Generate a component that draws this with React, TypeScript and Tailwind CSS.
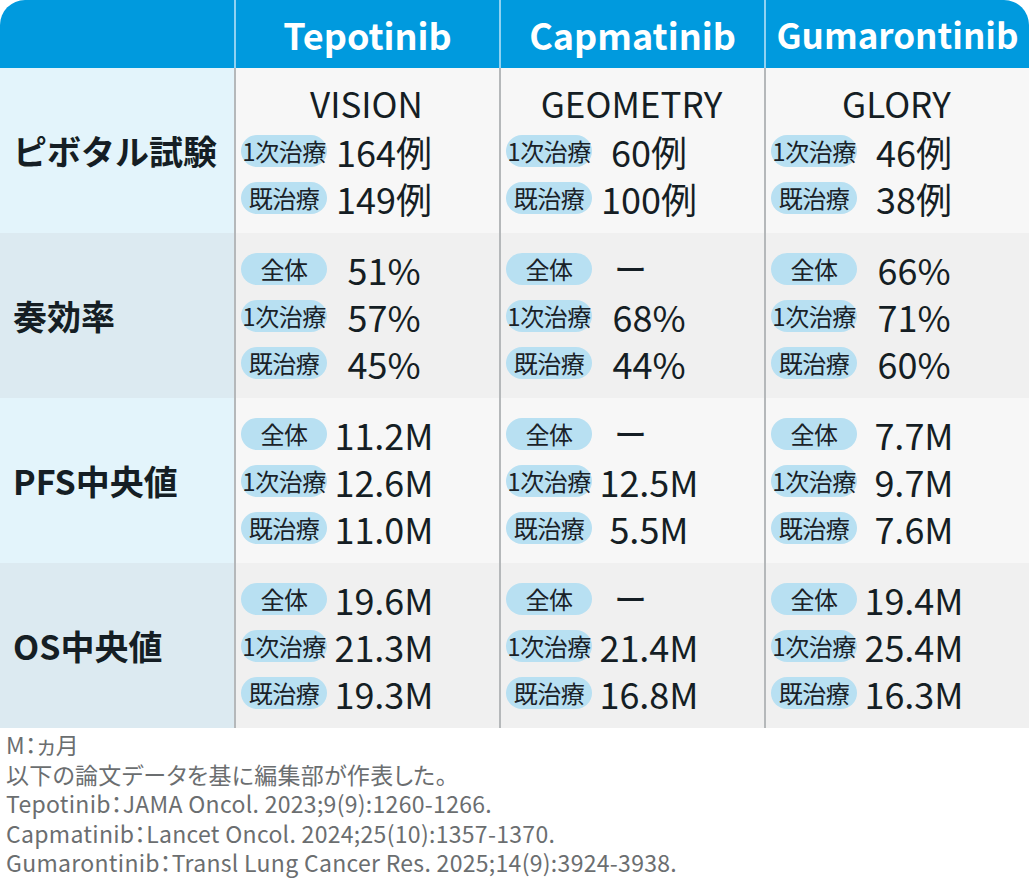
const font = { fontFamily: '"Noto Sans CJK JP", "Noto Sans", sans-serif' };

type Line = { tag: string; value: string };
type Cell = { title?: string; lines: Line[] };
type Row = { label: string; cells: Cell[] };

const drugs = ["Tepotinib", "Capmatinib", "Gumarontinib"];

const rows: Row[] = [
  {
    label: "ピボタル試験",
    cells: [
      { title: "VISION", lines: [{ tag: "1次治療", value: "164例" }, { tag: "既治療", value: "149例" }] },
      { title: "GEOMETRY", lines: [{ tag: "1次治療", value: "60例" }, { tag: "既治療", value: "100例" }] },
      { title: "GLORY", lines: [{ tag: "1次治療", value: "46例" }, { tag: "既治療", value: "38例" }] },
    ],
  },
  {
    label: "奏効率",
    cells: [
      { lines: [{ tag: "全体", value: "51%" }, { tag: "1次治療", value: "57%" }, { tag: "既治療", value: "45%" }] },
      { lines: [{ tag: "全体", value: "ー" }, { tag: "1次治療", value: "68%" }, { tag: "既治療", value: "44%" }] },
      { lines: [{ tag: "全体", value: "66%" }, { tag: "1次治療", value: "71%" }, { tag: "既治療", value: "60%" }] },
    ],
  },
  {
    label: "PFS中央値",
    cells: [
      { lines: [{ tag: "全体", value: "11.2M" }, { tag: "1次治療", value: "12.6M" }, { tag: "既治療", value: "11.0M" }] },
      { lines: [{ tag: "全体", value: "ー" }, { tag: "1次治療", value: "12.5M" }, { tag: "既治療", value: "5.5M" }] },
      { lines: [{ tag: "全体", value: "7.7M" }, { tag: "1次治療", value: "9.7M" }, { tag: "既治療", value: "7.6M" }] },
    ],
  },
  {
    label: "OS中央値",
    cells: [
      { lines: [{ tag: "全体", value: "19.6M" }, { tag: "1次治療", value: "21.3M" }, { tag: "既治療", value: "19.3M" }] },
      { lines: [{ tag: "全体", value: "ー" }, { tag: "1次治療", value: "21.4M" }, { tag: "既治療", value: "16.8M" }] },
      { lines: [{ tag: "全体", value: "19.4M" }, { tag: "1次治療", value: "25.4M" }, { tag: "既治療", value: "16.3M" }] },
    ],
  },
];

const notes = [
  "M：ヵ月",
  "以下の論文データを基に編集部が作表した。",
  "Tepotinib：JAMA Oncol. 2023;9(9):1260-1266.",
  "Capmatinib：Lancet Oncol. 2024;25(10):1357-1370.",
  "Gumarontinib：Transl Lung Cancer Res. 2025;14(9):3924-3938.",
];

const DataCell = ({ cell, even }: { cell: Cell; even: boolean }) => (
  <div
    className={`flex flex-col justify-center border-l-2 border-[#b5b8ba] pl-[5px] ${
      even ? "bg-[#f0f0f0]" : "bg-[#f7f7f7]"
    }`}
  >
    {cell.title && (
      <div className="h-[47px] flex items-center justify-center pr-[7px] text-[35px] text-[#151e24]">
        {cell.title}
      </div>
    )}
    {cell.lines.map((l) => (
      <div key={l.tag} className="h-[47px] flex items-center">
        <span className="w-[86px] h-[32px] shrink-0 rounded-full bg-[#b8e0f2] flex items-center justify-center text-[24px] tracking-[-0.5px] text-[#1a2228] whitespace-nowrap">
          {l.tag}
        </span>
        {l.value === "ー" ? (
          <span className="ml-[22px] text-[33px] text-[#151e24]">ー</span>
        ) : (
          <span className="ml-[7px] w-[100px] shrink-0 text-center text-[36px] text-[#151e24] whitespace-nowrap">
            {l.value}
          </span>
        )}
      </div>
    ))}
  </div>
);

export default function App() {
  return (
    <div className="w-[1029px] h-[888px] bg-white" style={font}>
      <div className="grid grid-cols-[234px_265px_265px_265px] grid-rows-[68px_165px_165px_165px_165px]">
        <div className="bg-[#009ade] rounded-tl-[25px]" />
        {drugs.map((d, i) => (
          <div
            key={d}
            className={`bg-[#009ade] border-l-2 border-[#8fd2f2] flex items-center justify-center text-white font-bold ${
              i === 2 ? "rounded-tr-[25px] text-[35px]" : "text-[36px]"
            }`}
          >
            {d}
          </div>
        ))}
        {rows.map((r, ri) => (
          <>
            <div
              key={r.label}
              className={`flex items-center pl-[13px] text-[34px] font-bold text-[#151e24] ${
                ri % 2 ? "bg-[#dceaf1]" : "bg-[#e3f4fb]"
              }`}
            >
              {r.label}
            </div>
            {r.cells.map((c, ci) => (
              <DataCell key={ri + "-" + ci} cell={c} even={ri % 2 === 1} />
            ))}
          </>
        ))}
      </div>
      <div className="pt-[2px] pl-[6px] text-[23px] leading-[29.5px] tracking-[0.3px] text-[#6b6e70] [font-feature-settings:'palt']">
        {notes.map((n) => (
          <p key={n}>{n}</p>
        ))}
      </div>
    </div>
  );
}
